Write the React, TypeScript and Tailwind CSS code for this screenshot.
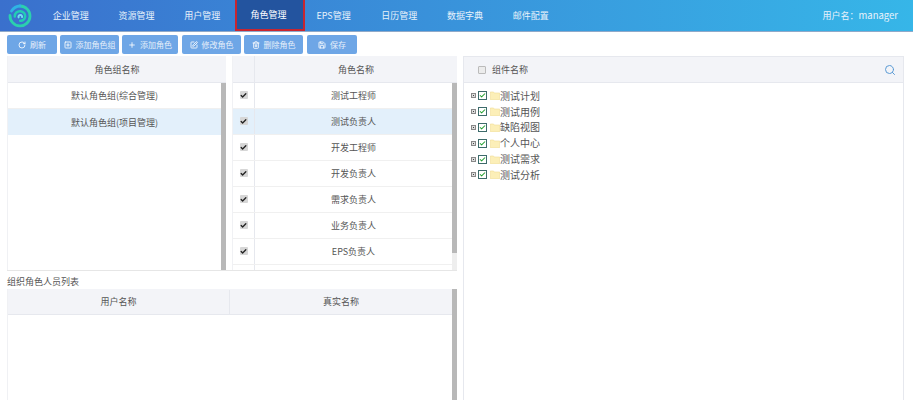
import React from "react";
import { RotateCw, SquarePlus, Plus, SquarePen, Trash2, Save, Search, Check } from "lucide-react";

const font = { fontFamily: '"Noto Sans CJK SC","Liberation Sans",sans-serif' };
const nav = ["企业管理", "资源管理", "用户管理", "角色管理", "EPS管理", "日历管理", "数据字典", "邮件配置"];
const btns: [string, any, string][] = [
  ["刷新", RotateCw, "w-[50px]"],
  ["添加角色组", SquarePlus, "w-[59px]"],
  ["添加角色", Plus, "w-[56px]"],
  ["修改角色", SquarePen, "w-[59px] ml-[1px]"],
  ["删除角色", Trash2, "w-[59px]"],
  ["保存", Save, "w-[50px] ml-[1px]"],
];
const roles = ["测试工程师", "测试负责人", "开发工程师", "开发负责人", "需求负责人", "业务负责人", "EPS负责人"];
const tree = ["测试计划", "测试用例", "缺陷视图", "个人中心", "测试需求", "测试分析"];

function Logo() {
  return (
    <svg width="24" height="24" viewBox="0 0 24 24" fill="none" className="ml-[8px] mt-[4px]">
      <path d="M12 2a10 10 0 0 1 10 10.500c-.3 5.500-5 9.700-10.500 9.400C6 21.600 1.800 17 2 11.500" stroke="#2bd0ae" strokeWidth="2.800" strokeLinecap="round" />
      <path d="M3.500 7C5.500 4 8.500 2.200 12 2" stroke="#2fb4e4" strokeWidth="2.800" strokeLinecap="round" />
      <path d="M6.800 12.500c-.2-3.200 2.500-5.600 5.700-5.300 3 .3 5 2.800 4.700 5.500-.3 2.500-2.500 4.300-5 4" stroke="#22cdb4" strokeWidth="2.500" strokeLinecap="round" />
      <path d="M10.600 13.400c-.5-1.300.6-2.500 1.900-2.400 1.100.1 1.800 1.100 1.500 2.100" stroke="#6fe0f2" strokeWidth="2" strokeLinecap="round" />
    </svg>
  );
}

function Box() {
  return (
    <span className="w-[8px] h-[8px] rounded-[1px] bg-[#d6d6d6] flex items-center justify-center">
      <Check size={7} strokeWidth={4.500} className="text-[#222]" />
    </span>
  );
}

function Scroll({ thumb }: { thumb?: string }) {
  return (
    <div className="w-[5px] shrink-0 bg-[#eeeeee] self-stretch">
      <div className={`${thumb ?? "h-full"} bg-[#b8b8b8]`} />
    </div>
  );
}

function Folder() {
  return (
    <svg width="10" height="9" viewBox="0 0 10 9" className="ml-[3px]">
      <path d="M.3 1h3.200l.8 1H9.700v6.700H.3z" fill="#fcefb8" stroke="#f0dc94" strokeWidth=".6" />
    </svg>
  );
}

export default function App() {
  return (
    <div className="w-[913px] h-[400px] overflow-hidden bg-white text-[9px] text-[#555]" style={font}>
      <header className="h-[32px] flex bg-gradient-to-r from-[#3a70cd] to-[#36b6e8] border-b border-[#8fa9c9] text-[#e8f2fb]">
        <div className="w-[38px]"><Logo /></div>
        {nav.map((n, i) => (
          <div key={n} className="w-[65.700px] h-[31px] flex items-center justify-center">
            {i === 3 ? (
              <span className="w-[70px] h-[31px] shrink-0 ml-[5px] pr-[4px] bg-[#23549f] border-2 border-t-0 border-[#c8252f] flex items-center justify-center text-white">{n}</span>
            ) : n}
          </div>
        ))}
        <div className="flex-1 flex items-center justify-end pr-[15px]">用户名：<span className="text-[9.500px]">manager</span></div>
      </header>

      <div className="flex gap-[3px] pl-[7px] pt-[3px] h-[24px] text-[8px] text-[#e6effa]">
        {btns.map(([t, I, w]) => (
          <div key={t} className={`${w} h-[19px] bg-[#6ea6e6] rounded-[2px] flex items-center justify-center gap-[4px]`}>
            <I size={8} strokeWidth={2.500} className="text-white" />
            <span className="whitespace-nowrap">{t}</span>
          </div>
        ))}
      </div>

      <div className="flex pl-[7px]">
        <div className="w-[450px] shrink-0">
          <div className="flex gap-[6px] h-[215px] border-b border-[#e6e6e6]">
            <div className="w-[219px] flex flex-col border-l border-[#f0f1f4]">
              <div className="h-[27px] pt-[2px] bg-[#f3f4f8] border-b border-[#e6e8ee] flex items-center justify-center shrink-0">角色组名称</div>
              <div className="flex flex-1 min-h-0">
                <div className="flex-1">
                  <div className="h-[26px] pt-[1px] flex items-center justify-center border-b border-[#f0f0f0]">默认角色组(综合管理)</div>
                  <div className="h-[26px] pt-[1px] flex items-center justify-center bg-[#e3f0fb]">默认角色组(项目管理)</div>
                </div>
                <Scroll />
              </div>
            </div>
            <div className="w-[225px] flex flex-col overflow-hidden border-l border-[#f0f1f4]">
              <div className="h-[27px] bg-[#f3f4f8] border-b border-[#e6e8ee] flex shrink-0">
                <div className="w-[22px] border-r border-[#e6e8ee]" />
                <div className="flex-1 pt-[2px] flex items-center justify-center">角色名称</div>
              </div>
              <div className="flex flex-1 min-h-0">
                <div className="flex-1 overflow-hidden">
                  {roles.map((r, i) => (
                    <div key={r} className={`h-[26px] flex border-b border-[#f0f0f0] ${i === 1 ? "bg-[#e3f0fb]" : ""}`}>
                      <div className="w-[22px] border-r border-[#e6e8ee] flex justify-center pt-[8px]"><Box /></div>
                      <div className="flex-1 pt-[1px] flex items-center justify-center">{r}</div>
                    </div>
                  ))}
                  <div className="h-[6px] ml-[21px] border-l border-[#e6e8ee]" />
                </div>
                <Scroll thumb="h-[170px]" />
              </div>
            </div>
          </div>
          <div className="h-[18px] pt-[4px] leading-[14px] text-[#555]">组织角色人员列表</div>
          <div className="flex h-[111px]">
            <div className="flex-1 border-l border-[#f0f1f4]">
              <div className="h-[26px] pt-[1px] flex bg-[#f3f4f8] border-b border-[#e6e8ee]">
                <div className="w-[222px] flex items-center justify-center border-r border-[#e6e8ee]">用户名称</div>
                <div className="flex-1 flex items-center justify-center">真实名称</div>
              </div>
            </div>
            <Scroll />
          </div>
        </div>

        <div className="w-[441px] ml-[6px] h-[344px] border border-b-0 border-[#e6e8ee]">
          <div className="h-[26px] pt-[1px] bg-[#f3f4f8] border-b border-[#e6e8ee] flex items-center pl-[14px] pr-[7px]">
            <span className="w-[8px] h-[8px] bg-[#ececec] border border-[#bbb] rounded-[1px] mr-[6px]" />
            <span>组件名称</span>
            <Search size={12} className="ml-auto text-[#5b9bd5]" />
          </div>
          <div className="pt-[5px] pl-[7px] text-[10px] text-[#555]">
            {tree.map((t) => (
              <div key={t} className="h-[15.800px] flex items-center">
                <span className="w-[5px] h-[5px] border border-[#888] bg-[#ddd] mr-[2px] relative">
                  <span className="absolute inset-[1px] bg-[#444]" />
                </span>
                <span className="w-[9px] h-[9px] border border-[#3d6b6b] flex items-center justify-center">
                  <Check size={7} strokeWidth={3.500} className="text-[#23a030]" />
                </span>
                <Folder />
                <span className="leading-none">{t}</span>
              </div>
            ))}
          </div>
        </div>
      </div>
    </div>
  );
}
